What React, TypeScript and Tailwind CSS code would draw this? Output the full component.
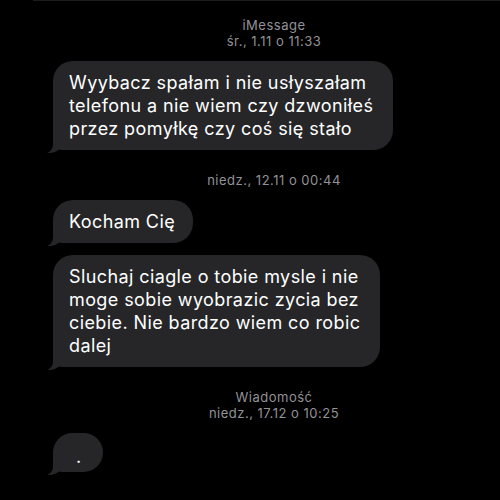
import { ReactNode } from "react";

const font = { fontFamily: "Inter, 'Liberation Sans', sans-serif" };

const Tail = () => (
    <svg className="absolute left-[-6px] bottom-[-3px]" width="26" height="22" viewBox="0 0 26 22">
        <path d="M6 0 L6 13 C6 18 3 21 0 22 C5 22.5 9 21 12 18.5 C14 19 16 19 26 19 L26 0 Z" fill="#262628" />
    </svg>
)

interface BubbleProps {
    children?: ReactNode
    className?: string
}

const Bubble = ({children, className = ""}: BubbleProps) => {
    return(
        <div className={`relative rounded-[20px] bg-[#262628] text-white text-[18px] leading-[23px] tracking-[0.4px] whitespace-nowrap ${className}`}>
            <div className="relative z-10">{children}</div>
            <Tail />
        </div>
    )
}

const Stamp = ({top, bottom, className = ""}: {top?: string, bottom: string, className?: string}) => (
    <div className={`pl-[48px] text-center text-[13px] leading-[16px] tracking-[0.5px] text-[#929297] ${className}`}>
        {top && <p>{top}</p>}
        <p>{bottom}</p>
    </div>
)

export default function App() {
    return(
        <div style={font} className="w-[500px] h-[500px] bg-black overflow-hidden">
            <div className="ml-[33px] h-px bg-[#1c1c1e]" />
            <Stamp className="mt-[16px]" top="iMessage" bottom="śr., 1.11 o 11:33" />

            <div className="pl-[53px] flex flex-col items-start">
                <Bubble className="mt-[12px] pl-[16px] pr-[20px] py-[10px]">
                    Wyybacz spałam i nie usłyszałam<br />
                    telefonu a nie wiem czy dzwoniłeś<br />
                    przez pomyłkę czy coś się stało
                </Bubble>
            </div>

            <Stamp className="mt-[22px]" bottom="niedz., 12.11 o 00:44" />

            <div className="pl-[53px] flex flex-col items-start gap-[12px]">
                <Bubble className="mt-[12px] pl-[16px] pr-[18px] py-[10px]">
                    Kocham Cię
                </Bubble>
                <Bubble className="pl-[16px] pr-[20px] py-[10px]">
                    Sluchaj ciagle o tobie mysle i nie<br />
                    moge sobie wyobrazic zycia bez<br />
                    ciebie. Nie bardzo wiem co robic<br />
                    dalej
                </Bubble>
            </div>

            <Stamp className="mt-[22px]" top="Wiadomość" bottom="niedz., 17.12 o 10:25" />

            <div className="pl-[53px] flex flex-col items-start">
                <Bubble className="mt-[12px] w-[50px] h-[39px] pl-[23px] pt-[12px]">
                    .
                </Bubble>
            </div>
        </div>
    )
}
